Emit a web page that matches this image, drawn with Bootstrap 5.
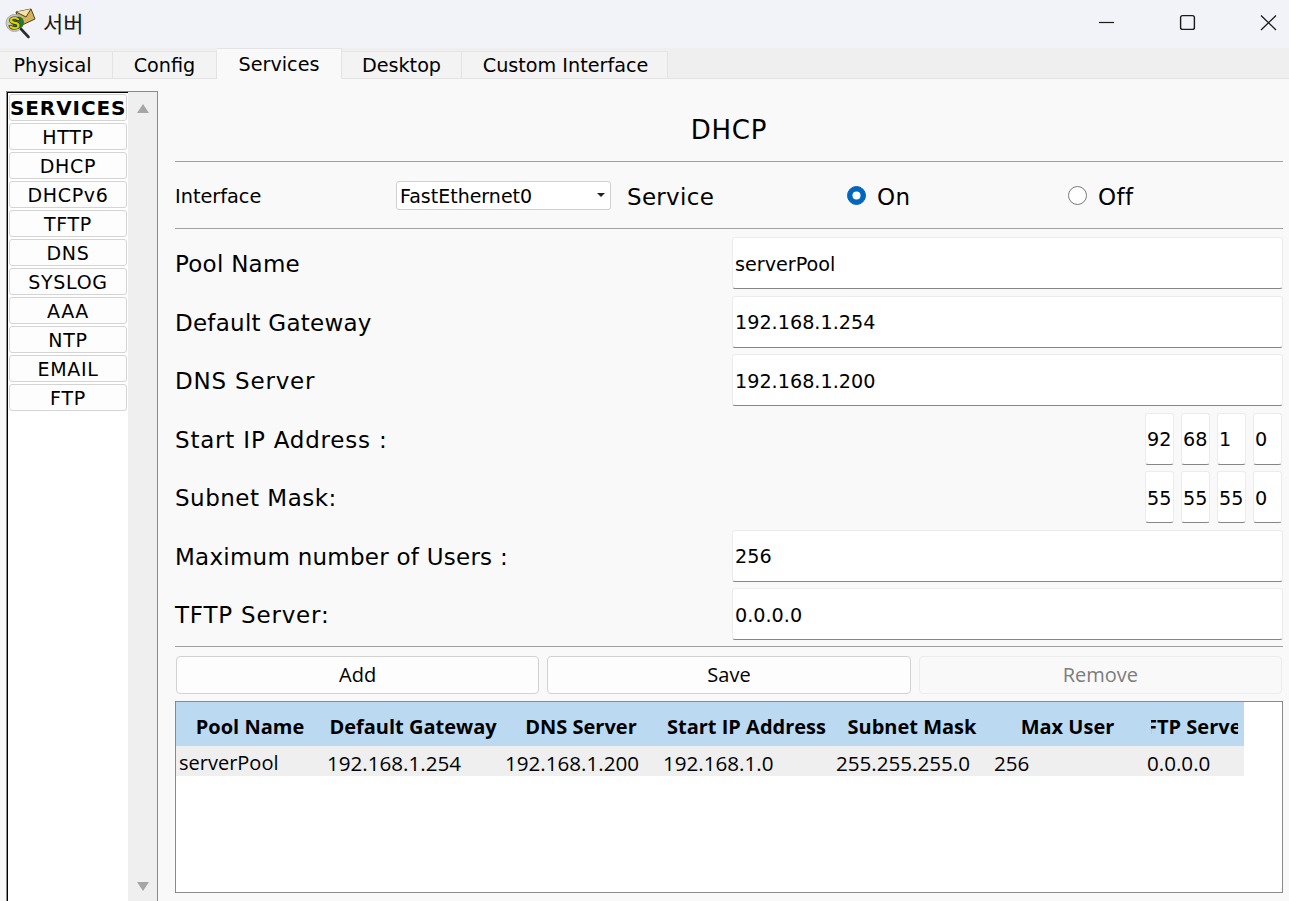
<!DOCTYPE html>
<html lang="ko">
<head>
<meta charset="utf-8">
<title>서버</title>
<link href="https://cdn.jsdelivr.net/npm/bootstrap@5.3.0/dist/css/bootstrap.min.css" rel="stylesheet">
<style>
html,body{height:901px;overflow:hidden}
body{background:#f9f9f9;color:#000;font-family:"DejaVu Sans","Liberation Sans",sans-serif;display:flex;flex-direction:column}
.titlebar{height:48px;background:#f1f3f8;flex:none;padding-left:4px}
.titlebar .wintitle{font-family:"Noto Sans CJK KR",sans-serif;font-size:22px;color:#1a1a1a;margin-left:7px;line-height:1;padding-bottom:5px}
.winbtns{margin-left:auto;display:flex}
.winbtns svg{display:block}
.tabstrip{height:31px;background:#efefef;border-bottom:1px solid #e3e3e3;flex:none;align-items:flex-end;flex-wrap:nowrap}
.tabstrip .tabitem{height:27px;background:#f3f3f3;border-right:1px solid #e3e3e3;border-top:1px solid #e6e6e6;font-size:19.2px;line-height:28px;color:#000;text-align:center;margin-bottom:0}
.tabstrip .tabitem.on{height:31px;background:#f9f9f9;border-top:1px solid #e3e3e3;line-height:32px;margin-bottom:-1px;position:relative}
.w1{width:113px;padding-right:7px}.w2{width:104px}.w3{width:125px}.w4{width:120px}.w5{width:206px;padding-left:2px}
.mainarea{flex:1;min-height:0;padding:12px 6px 0 6px;gap:17px}
.sidepane{width:152px;flex:none;border:1px solid #8a8a8a;border-bottom:0;background:#efefef;height:815px}
.sidelist{width:121px;background:#fff;border-left:1px solid #000;border-top:1px solid #000;padding:1px 1px;gap:2px}
.sidebtn{height:27px;border:1px solid #d4d4d4;border-radius:3px;background:#fdfdfd;font-size:19px;letter-spacing:.7px;line-height:27px;text-align:center;color:#000;padding:0;white-space:nowrap;overflow:hidden}
.sidebtn.head{font-weight:700;letter-spacing:.9px;font-size:20px;line-height:26px}
.scrollrail{flex:1;position:relative}
.arrowup,.arrowdn{position:absolute;left:8.5px;width:0;height:0;border-left:6px solid transparent;border-right:6px solid transparent}
.arrowup{top:12px;border-bottom:9px solid #a6a6a6}
.arrowdn{bottom:15px;border-top:9px solid #a6a6a6}
.formpane{width:1108px;flex:none}
.dhcptitle{height:71px;border-bottom:1px solid #a0a0a0;font-size:26px;letter-spacing:.8px;text-align:center;line-height:78px;margin:0;font-weight:400}
.ifacerow{height:67px;border-bottom:1px solid #a0a0a0;margin-bottom:8px}
.lblsmall{font-size:19.3px;width:221px;flex:none;padding-top:4px}
.ifacesel{width:215px;height:29px;flex:none;border:1px solid #d0d0d0;border-radius:3px;font-size:19px;padding:2px 0 0 3px;line-height:25px;color:#000;background:#fff url("data:image/svg+xml,%3Csvg xmlns='http://www.w3.org/2000/svg' width='8' height='4'%3E%3Cpath d='M0 0h8L4 4z' fill='%23222'/%3E%3C/svg%3E") no-repeat right 5px center;box-shadow:none}
.lblsvc{font-size:23px;margin-left:16px;width:220px;flex:none;letter-spacing:.3px;padding-top:4px}
.radiogrp{width:221px;flex:none;margin:0;padding:4px 0 0;min-height:0;display:flex;align-items:center;gap:11px;font-size:23px;letter-spacing:.4px}
.radiogrp .form-check-input{width:19px;height:19px;margin:-4px 0 0;float:none;background-color:#fff;border:1px solid #7a7a7a}
.radiogrp .form-check-input:checked{background-color:#0067c0;border-color:#0067c0;background-image:url("data:image/svg+xml,%3Csvg xmlns='http://www.w3.org/2000/svg' viewBox='-4 -4 8 8'%3E%3Ccircle r='1.9' fill='%23fff'/%3E%3C/svg%3E")}
.fieldstack{gap:6.5px}
.fieldrow{height:52px}
.fieldlbl{font-size:23px;letter-spacing:.25px;width:557px;flex:none;padding-top:3px}
.fieldlbl.sp5{letter-spacing:.5px}
.fieldlbl.sp8{letter-spacing:.8px}
.fieldinp{width:551px;height:52px;flex:none;border:1px solid #ececec;border-bottom:1px solid #868686;border-radius:3px;background:#fff;font-size:19.2px;padding:2px 2px 0;color:#000;box-shadow:none}
.octets{margin-left:auto;margin-right:1px;gap:7px}
.octet{width:29px;height:52px;border:1px solid #ececec;border-bottom:1px solid #868686;border-radius:3px;background:#fff;font-size:19.2px;padding:2px 0 0 1px;color:#000;box-shadow:none}
.rulerow{border-top:1px solid #a0a0a0;margin-top:6px;padding:9px 1px 0 0;gap:8px}
.actbtn{flex:1;height:38px;border:1px solid #d2d2d2;border-radius:4px;background:#fdfdfd;font-family:"Open Sans","Noto Sans",sans-serif;font-size:20px;padding:0;color:#000;margin-left:1px}
.actbtn+.actbtn{margin-left:0}
.actbtn:disabled{background:#f9f9f9;border-color:#ececec;color:#7d7d7d;opacity:1}
.tablebox{height:192px;border:1px solid #8a8a8a;background:#fff;margin-top:7px;font-family:"Open Sans","Noto Sans",sans-serif;width:1108px}
.pooltable{width:1068px;table-layout:fixed;border-collapse:collapse;margin:0}
.pooltable th{height:44px;background:#bbdaf2;font-size:20px;line-height:30px;font-weight:700;padding:6px 0 0;text-align:center;overflow:hidden;white-space:nowrap;color:#000}
.pooltable td{height:30px;background:#efefef;font-size:20px;line-height:26px;padding:4px 0 0 3px;white-space:nowrap;color:#000;overflow:hidden}
.pooltable td.numcell{font-size:20.6px;padding-top:3px}
.clipcell{display:flex;justify-content:center;overflow:hidden;margin:0 6px 0 7px;white-space:nowrap}
.clipcell span{flex:none;margin-right:4px}
</style>
</head>
<body>
<div class="titlebar d-flex align-items-center">
  <svg width="32" height="32" viewBox="0 0 32 32" aria-hidden="true">
    <path d="M12 4 L27 1 L31 11 L16 18 Z" fill="#d8b25a" stroke="#4a4020" stroke-width="1"/>
    <path d="M12 4 L22 9 L27 1" fill="#f5e2a6" stroke="#4a4020" stroke-width="1"/>
    <circle cx="10.5" cy="15" r="8.5" fill="#c9cdc9" stroke="#a8aca8"/>
    <circle cx="14" cy="14.5" r="6" fill="#1f7a2b"/>
    <text x="10.5" y="21" text-anchor="middle" font-family="Liberation Sans" font-weight="700" font-size="17" fill="#e3cf00" stroke="#111" stroke-width="1.1" paint-order="stroke">S</text>
    <path d="M17 21 L24.5 29" stroke="#2c2c2c" stroke-width="2.6" stroke-linecap="round"/>
  </svg>
  <span class="wintitle">서버</span>
  <div class="winbtns">
    <svg width="244" height="48" viewBox="0 0 244 48" fill="none" stroke="#1a1a1a">
      <path d="M54 22.5H69" stroke-width="1.2"/>
      <rect x="135.6" y="15.6" width="13.8" height="13.8" rx="2" stroke-width="1.4"/>
      <path d="M216 15.5L231 30M231 15.5L216 30" stroke-width="1.3"/>
    </svg>
  </div>
</div>
<div class="nav tabstrip">
  <div class="nav-item tabitem w1">Physical</div>
  <div class="nav-item tabitem w2">Config</div>
  <div class="nav-item tabitem on w3">Services</div>
  <div class="nav-item tabitem w4">Desktop</div>
  <div class="nav-item tabitem w5">Custom Interface</div>
</div>
<div class="mainarea d-flex">
  <div class="sidepane d-flex">
    <div class="sidelist d-flex flex-column">
      <div class="sidebtn head">SERVICES</div>
      <div class="sidebtn">HTTP</div>
      <div class="sidebtn">DHCP</div>
      <div class="sidebtn">DHCPv6</div>
      <div class="sidebtn">TFTP</div>
      <div class="sidebtn">DNS</div>
      <div class="sidebtn">SYSLOG</div>
      <div class="sidebtn">AAA</div>
      <div class="sidebtn">NTP</div>
      <div class="sidebtn">EMAIL</div>
      <div class="sidebtn">FTP</div>
    </div>
    <div class="scrollrail"><span class="arrowup"></span><span class="arrowdn"></span></div>
  </div>
  <div class="formpane d-flex flex-column">
    <h1 class="dhcptitle">DHCP</h1>
    <div class="ifacerow d-flex align-items-center">
      <span class="lblsmall">Interface</span>
      <select class="form-select ifacesel"><option>FastEthernet0</option></select>
      <span class="lblsvc">Service</span>
      <label class="form-check radiogrp"><input class="form-check-input" type="radio" name="svc" checked>On</label>
      <label class="form-check radiogrp"><input class="form-check-input" type="radio" name="svc">Off</label>
    </div>
    <div class="fieldstack d-flex flex-column">
      <div class="fieldrow d-flex align-items-center"><span class="fieldlbl">Pool Name</span><input class="form-control fieldinp" value="serverPool"></div>
      <div class="fieldrow d-flex align-items-center"><span class="fieldlbl">Default Gateway</span><input class="form-control fieldinp" value="192.168.1.254"></div>
      <div class="fieldrow d-flex align-items-center"><span class="fieldlbl sp8">DNS Server</span><input class="form-control fieldinp" value="192.168.1.200"></div>
      <div class="fieldrow d-flex align-items-center"><span class="fieldlbl sp8">Start IP Address :</span>
        <div class="octets d-flex"><input class="form-control octet" value="92"><input class="form-control octet" value="68"><input class="form-control octet" value="1"><input class="form-control octet" value="0"></div></div>
      <div class="fieldrow d-flex align-items-center"><span class="fieldlbl sp5">Subnet Mask:</span>
        <div class="octets d-flex"><input class="form-control octet" value="55"><input class="form-control octet" value="55"><input class="form-control octet" value="55"><input class="form-control octet" value="0"></div></div>
      <div class="fieldrow d-flex align-items-center"><span class="fieldlbl">Maximum number of Users :</span><input class="form-control fieldinp" value="256"></div>
      <div class="fieldrow d-flex align-items-center"><span class="fieldlbl sp8">TFTP Server:</span><input class="form-control fieldinp" value="0.0.0.0"></div>
    </div>
    <div class="rulerow d-flex">
      <button class="btn actbtn" type="button">Add</button>
      <button class="btn actbtn" type="button">Save</button>
      <button class="btn actbtn" type="button" disabled>Remove</button>
    </div>
    <div class="tablebox">
      <table class="pooltable">
        <colgroup><col style="width:148px"><col style="width:178px"><col style="width:158px"><col style="width:173px"><col style="width:158px"><col style="width:153px"><col style="width:100px"></colgroup>
        <thead><tr><th>Pool Name</th><th>Default Gateway</th><th>DNS Server</th><th>Start IP Address</th><th>Subnet Mask</th><th>Max User</th><th><div class="clipcell"><span>TFTP Server</span></div></th></tr></thead>
        <tbody><tr><td>serverPool</td><td class="numcell">192.168.1.254</td><td class="numcell">192.168.1.200</td><td class="numcell">192.168.1.0</td><td class="numcell">255.255.255.0</td><td class="numcell">256</td><td class="numcell">0.0.0.0</td></tr></tbody>
      </table>
    </div>
  </div>
</div>
</body>
</html>
